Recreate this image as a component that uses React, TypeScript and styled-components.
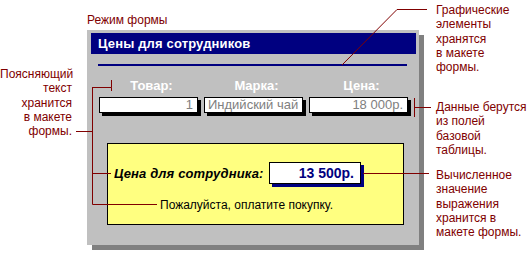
import React from 'react'
import styled, { createGlobalStyle } from 'styled-components'

const GlobalStyle = createGlobalStyle`
  html, body {
    margin: 0;
    padding: 0;
    background: #ffffff;
  }
  body {
    font-family: 'Liberation Sans', Arial, sans-serif;
  }
`

interface Note {
  x: number
  y: number
  lines: string[]
  align?: 'left' | 'right'
  width?: number
}

const notes: Note[] = [
  { x: 87, y: 13, lines: ['Режим формы'] },
  {
    x: 0,
    y: 67,
    width: 72,
    align: 'right',
    lines: ['Поясняющий', 'текст', 'хранится', 'в макете', 'формы.'],
  },
  { x: 436, y: 3, lines: ['Графические', 'элементы', 'хранятся', 'в макете', 'формы.'] },
  { x: 436, y: 100, lines: ['Данные берутся', 'из полей', 'базовой', 'таблицы.'] },
  {
    x: 436,
    y: 168,
    lines: ['Вычисленное', 'значение', 'выражения', 'хранится в', 'макете формы.'],
  },
]

const fields = [
  { label: 'Товар:', value: '1', align: 'right' as const },
  { label: 'Марка:', value: 'Индийский чай', align: 'left' as const },
  { label: 'Цена:', value: '18 000р.', align: 'right' as const },
]

// 지시선
const leaders: [number, number][][] = [
  [[427, 9.5], [397, 9.5], [342, 65]],
  [[414.5, 98], [414.5, 117]],
  [[414.5, 107.5], [431, 107.5]],
  [[76, 131.5], [92.5, 131.5]],
  [[92.5, 87], [92.5, 204.5]],
  [[92.5, 87.5], [111.5, 87.5], [111.5, 80]],
  [[111.5, 87.5], [111.5, 91]],
  [[92.5, 173.5], [111, 173.5]],
  [[92.5, 204.5], [157, 204.5]],
  [[363, 173.5], [429, 173.5]],
]

const App = () => {
  return (
    <>
      <GlobalStyle />
      <Canvas>
        <FormWindow>
          <TitleBar>Цены для сотрудников</TitleBar>
          <Rule />
          <FieldGrid>
            {fields.map((f) => (
              <FieldLabel key={f.label}>{f.label}</FieldLabel>
            ))}
            {fields.map((f) => (
              <FieldBox key={f.value} $align={f.align}>
                {f.value}
              </FieldBox>
            ))}
          </FieldGrid>
          <PricePanel>
            <PriceRow>
              <PriceLabel>Цена для сотрудника:</PriceLabel>
              <PriceBox>13 500р.</PriceBox>
            </PriceRow>
            <PayNotice>Пожалуйста, оплатите покупку.</PayNotice>
          </PricePanel>
        </FormWindow>

        {notes.map((note) => (
          <Annotation
            key={note.lines[0]}
            $x={note.x}
            $y={note.y}
            $align={note.align ?? 'left'}
            $width={note.width}
          >
            {note.lines.map((line) => (
              <div key={line}>{line}</div>
            ))}
          </Annotation>
        ))}

        <LeaderLayer width='530' height='260' viewBox='0 0 530 260'>
          {leaders.map((pts, i) => (
            <polyline
              key={i}
              points={pts.map((p) => p.join(',')).join(' ')}
              fill='none'
              stroke='#800000'
              strokeWidth='1'
            />
          ))}
        </LeaderLayer>
      </Canvas>
    </>
  )
}

export default App

const Canvas = styled.div`
  position: relative;
  width: 530px;
  height: 260px;
  overflow: hidden;
  background: #ffffff;
`

// 폼 창
const FormWindow = styled.div`
  position: absolute;
  left: 87px;
  top: 30px;
  width: 332px;
  height: 215px;
  display: flex;
  flex-direction: column;
  background: #c0c0c0;
  box-shadow: 5px 5px 0 #808080;
`
const TitleBar = styled.div`
  margin: 3px 3px 0 4px;
  height: 21px;
  padding: 1px 0 0 7px;
  box-sizing: border-box;
  background: #000080;
  color: #ffffff;
  font-size: 13px;
  font-weight: 700;
  line-height: 20px;
  letter-spacing: 0.15px;
`
const Rule = styled.div`
  height: 2px;
  margin: 10px 12px 0 11px;
  background: #000080;
`

// 필드
const FieldGrid = styled.div`
  display: grid;
  grid-template-columns: repeat(3, 99px);
  column-gap: 6px;
  row-gap: 4px;
  margin: 12px 0 0 12px;
`
const FieldLabel = styled.div`
  text-align: center;
  color: #ffffff;
  font-size: 13px;
  font-weight: 700;
  line-height: 15px;
  padding-left: 6px;
`
const FieldBox = styled.div<{ $align: 'left' | 'right' }>`
  height: 16px;
  box-sizing: border-box;
  padding: 0 4px 0 3px;
  border: 1px solid #000000;
  background: #ffffff;
  box-shadow: 3px 3px 0 #000000;
  color: #808080;
  font-size: 13px;
  line-height: 14px;
  text-align: ${({ $align }) => $align};
  white-space: nowrap;
  overflow: hidden;
`

// 직원가
const PricePanel = styled.div`
  margin: 30px 0 0 20px;
  width: 297px;
  height: 82px;
  box-sizing: border-box;
  border: 1px solid #000000;
  background: #ffff80;
`
const PriceRow = styled.div`
  display: grid;
  grid-template-columns: 155px 92px;
  align-items: center;
  margin-top: 18px;
  padding-left: 6px;
`
const PriceLabel = styled.div`
  color: #000000;
  font-size: 13px;
  font-weight: 700;
  font-style: italic;
  letter-spacing: 0.15px;
`
const PriceBox = styled.div`
  height: 22px;
  box-sizing: border-box;
  padding-right: 6px;
  border: 1px solid #000000;
  background: #ffffff;
  box-shadow: 3px 3px 0 #000080;
  color: #000080;
  font-size: 14px;
  font-weight: 700;
  line-height: 20px;
  text-align: right;
`
const PayNotice = styled.div`
  margin: 14px 0 0 52px;
  color: #000000;
  font-size: 12px;
  line-height: 14px;
`

// 설명
const Annotation = styled.div<{
  $x: number
  $y: number
  $align: 'left' | 'right'
  $width?: number
}>`
  position: absolute;
  left: ${({ $x }) => $x}px;
  top: ${({ $y }) => $y}px;
  width: ${({ $width }) => ($width ? `${$width}px` : 'auto')};
  text-align: ${({ $align }) => $align};
  color: #800000;
  font-size: 12px;
  line-height: 14.3px;
  white-space: nowrap;
`
const LeaderLayer = styled.svg`
  position: absolute;
  left: 0;
  top: 0;
  pointer-events: none;
`
